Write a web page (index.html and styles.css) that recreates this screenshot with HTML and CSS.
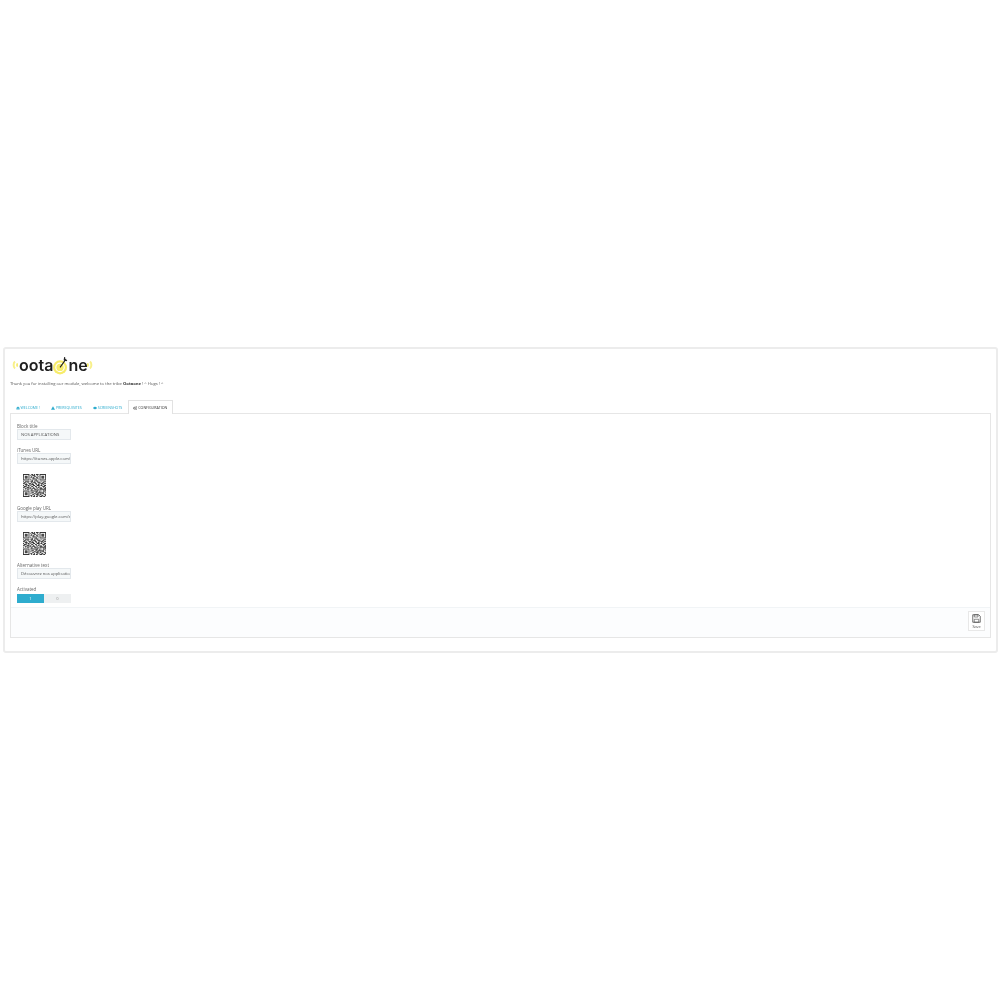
FILE: index.html
```html
<!DOCTYPE html>
<html lang="en">

<head>
    <meta charset="UTF-8">
    <title>Ootaone module configuration</title>
    <link rel="stylesheet" href="styles.css">
</head>

<body>
    <svg class="defs" width="0" height="0">
        <symbol id="qr" viewBox="0 0 25 25">
            <path fill="none" stroke="#1c1c1c" stroke-width="1" d="M0 .5h7M18 .5h7M9 .5h2M12 .5h1M14 .5h3
                M0 1.5h1M6 1.5h1M8 1.5h1M10 1.5h3M15 1.5h1M18 1.5h1M24 1.5h1
                M0 2.5h1M2 2.5h3M6 2.5h1M9 2.5h1M12 2.5h2M16 2.5h1M18 2.5h1M20 2.5h3M24 2.5h1
                M0 3.5h1M2 3.5h3M6 3.5h1M8 3.5h2M11 3.5h1M14 3.5h2M18 3.5h1M20 3.5h3M24 3.5h1
                M0 4.5h1M2 4.5h3M6 4.5h1M10 4.5h3M15 4.5h2M18 4.5h1M20 4.5h3M24 4.5h1
                M0 5.5h1M6 5.5h1M8 5.5h1M11 5.5h1M13 5.5h2M18 5.5h1M24 5.5h1
                M0 6.5h7M8 6.5h1M10 6.5h1M12 6.5h1M14 6.5h1M16 6.5h1M18 6.5h7
                M9 7.5h2M13 7.5h3
                M0 8.5h1M2 8.5h5M8 8.5h3M12 8.5h1M15 8.5h2M18 8.5h1M20 8.5h1M22 8.5h3
                M1 9.5h2M5 9.5h1M9 9.5h1M11 9.5h3M16 9.5h3M21 9.5h2
                M0 10.5h2M3 10.5h1M6 10.5h3M10 10.5h1M13 10.5h2M17 10.5h1M19 10.5h3M23 10.5h2
                M2 11.5h3M7 11.5h1M9 11.5h3M14 11.5h1M16 11.5h2M20 11.5h1M22 11.5h1
                M0 12.5h1M3 12.5h1M5 12.5h2M8 12.5h1M11 12.5h2M15 12.5h3M19 12.5h2M23 12.5h2
                M1 13.5h3M6 13.5h1M9 13.5h2M13 13.5h2M17 13.5h1M21 13.5h3
                M0 14.5h2M4 14.5h3M8 14.5h1M11 14.5h1M14 14.5h1M16 14.5h2M19 14.5h1M22 14.5h1M24 14.5h1
                M2 15.5h2M5 15.5h1M7 15.5h2M10 15.5h3M15 15.5h1M18 15.5h3M23 15.5h2
                M0 16.5h1M2 16.5h1M4 16.5h3M9 16.5h1M12 16.5h3M16 16.5h1M18 16.5h7
                M8 17.5h3M13 17.5h1M15 17.5h2M18 17.5h1M22 17.5h1M24 17.5h1
                M0 18.5h7M9 18.5h1M11 18.5h2M14 18.5h2M18 18.5h1M20 18.5h1M22 18.5h3
                M0 19.5h1M6 19.5h1M8 19.5h1M10 19.5h1M13 19.5h3M17 19.5h2M22 19.5h1
                M0 20.5h1M2 20.5h3M6 20.5h1M9 20.5h3M14 20.5h1M16 20.5h7M24 20.5h1
                M0 21.5h1M2 21.5h3M6 21.5h1M8 21.5h1M12 21.5h2M15 21.5h2M19 21.5h1M21 21.5h2
                M0 22.5h1M2 22.5h3M6 22.5h1M10 22.5h2M14 22.5h3M18 22.5h2M23 22.5h2
                M0 23.5h1M6 23.5h1M8 23.5h2M12 23.5h1M15 23.5h1M17 23.5h1M20 23.5h2M24 23.5h1
                M0 24.5h7M9 24.5h1M11 24.5h2M14 24.5h2M18 24.5h3M22 24.5h2" />
        </symbol>
    </svg>

    <div class="panel">
        <div class="logo">
            <svg class="logo-wave" viewBox="0 0 6 10">
                <path d="M3 1.500C1.200 3 1.200 7 3 8.500" fill="none" stroke="#f8f08a" stroke-width="2" />
                <path d="M5.500 3.500C4.800 4.500 4.800 5.500 5.500 6.500" fill="none" stroke="#f5e94f" stroke-width="1.400" />
            </svg>
            <span class="logo-text">oota</span>
            <svg class="logo-target" viewBox="0 0 16 20">
                <circle cx="7.500" cy="12" r="7.500" fill="#f7ec6a" />
                <circle cx="7.500" cy="12" r="4.500" fill="none" stroke="#fff" stroke-width="1.200" />
                <path d="M7.500 12L14 3M12.500 1l-.5 3 3 1" fill="none" stroke="#222" stroke-width="1.200" />
            </svg>
            <span class="logo-text">ne</span>
            <svg class="logo-wave" viewBox="0 0 6 10">
                <path d="M3 1.500C4.800 3 4.800 7 3 8.500" fill="none" stroke="#f8f08a" stroke-width="2" />
                <path d="M.5 3.500C1.200 4.500 1.200 5.500 .5 6.500" fill="none" stroke="#f5e94f" stroke-width="1.400" />
            </svg>
        </div>

        <p class="thanks">Thank you for installing our module, welcome to the tribe <b>Ootaone</b> ! ^ Hugs ! ^</p>

        <div class="tabs">
            <a class="tab">
                <svg class="tab-icon" viewBox="0 0 10 10"><path d="M5 1L0 5.500h1.500V9.500h2.500v-3h2v3h2.500V5.500H10z" /></svg>
                WELCOME !
            </a>
            <a class="tab">
                <svg class="tab-icon" viewBox="0 0 10 10"><path d="M5 .5L0 9.500h10z" /></svg>
                PREREQUISITES
            </a>
            <a class="tab">
                <svg class="tab-icon" viewBox="0 0 10 10"><path d="M0 5c2.500-4 7.500-4 10 0-2.500 4-7.500 4-10 0z" /></svg>
                SCREENSHOTS
            </a>
            <a class="tab active">
                <svg class="tab-icon" viewBox="0 0 10 10">
                    <circle cx="3.500" cy="5.500" r="2.300" fill="none" stroke="#333" stroke-width="1.500" />
                    <circle cx="8" cy="2.500" r="1.400" fill="none" stroke="#333" stroke-width="1" />
                    <circle cx="8" cy="8" r="1.400" fill="none" stroke="#333" stroke-width="1" />
                </svg>
                CONFIGURATION
            </a>
        </div>

        <div class="tab-content">
            <div class="form">
                <div class="field">
                    <label>Block title</label>
                    <div class="input">NOS APPLICATIONS</div>
                </div>
                <div class="field">
                    <label>iTunes URL</label>
                    <div class="input">https://itunes.apple.com/</div>
                </div>
                <svg class="qr"><use href="#qr" /></svg>
                <div class="field">
                    <label>Google play URL</label>
                    <div class="input">https://play.google.com/s</div>
                </div>
                <svg class="qr"><use href="#qr" /></svg>
                <div class="field">
                    <label>Alternative text</label>
                    <div class="input">Découvrez nos applicatio</div>
                </div>
                <div class="field">
                    <label>Activated</label>
                    <div class="switch">
                        <span class="switch-on">1</span>
                        <span class="switch-off">0</span>
                    </div>
                </div>
            </div>

            <div class="footer">
                <button class="save">
                    <svg class="save-icon" viewBox="0 0 12 12">
                        <path d="M1 1h8l2 2v8H1z" fill="none" stroke="#444" stroke-width="1" />
                        <path d="M3 1h5v3H3zM3 7h6v4H3z" fill="none" stroke="#444" stroke-width=".8" />
                    </svg>
                    Save
                </button>
            </div>
        </div>
    </div>
</body>

</html>
```

FILE: styles.css
```css
body {
    margin: 0;
    padding: 347px 2px 0 3px;
    background: white;
    font-family: 'Open Sans', sans-serif;
    color: #555;
}

.defs {
    position: absolute;
}

/* the reference is a scaled down shot, everything in it is a bit soft */
.panel {
    border: 2px solid #ececec;
    border-radius: 3px;
    padding: 8px 5px 13px 5px;
    height: 306px;
    box-sizing: border-box;
    filter: blur(0.3px);
}

.logo {
    display: flex;
    align-items: center;
    height: 16px;
    margin-left: 2px;
}

.logo-text {
    font-family: 'Inter', sans-serif;
    font-size: 16px;
    font-weight: 600;
    line-height: 16px;
    color: #1f1f1f;
}

.logo-wave {
    width: 6px;
    height: 10px;
    margin-right: 1px;
}

.logo-text + .logo-wave {
    margin: 0 0 0 -1px;
}

.logo-target {
    width: 15px;
    height: 19px;
}

.thanks {
    margin: 8px 0 0;
    font-size: 4.2px;
    line-height: 6px;
}

.thanks b {
    color: #333;
}

.tabs {
    display: flex;
    margin-top: 13px;
    height: 14px;
}

.tab {
    display: flex;
    align-items: center;
    gap: 1px;
    padding: 0 4.5px;
    font-size: 3.6px;
    color: #2eacce;
    border: 1px solid transparent;
    border-bottom: none;
}

.tab-icon {
    width: 4px;
    height: 4px;
    fill: #2eacce;
}

.tab.active {
    color: #333;
    background: white;
    border-color: #e2e2e2;
    position: relative;
    z-index: 1;
}

.tab-content {
    border: 1px solid #e6e6e6;
    margin-top: -1px;
    height: 225px;
    box-sizing: border-box;
    display: flex;
    flex-direction: column;
}

.form {
    flex: 1;
    min-height: 0;
    padding: 9px 6px 0;
    width: 54px;
}

.field {
    margin-bottom: 7px;
}

label {
    display: block;
    font-size: 4.5px;
    line-height: 6px;
    color: #666;
}

.input {
    box-sizing: border-box;
    width: 54px;
    height: 11px;
    padding: 0 3px;
    border: 1px solid #e3e8ec;
    background: #f5f8f9;
    font-size: 4.2px;
    line-height: 9px;
    white-space: nowrap;
    overflow: hidden;
    color: #555;
}

.qr {
    display: block;
    width: 23px;
    height: 23px;
    margin: 10px 0 7.5px 6px;
}

.switch {
    display: flex;
    height: 9px;
    margin-top: 2px;
    font-size: 4px;
    line-height: 9px;
    text-align: center;
}

.switch-on {
    flex: 1;
    background: #2eacce;
    color: white;
}

.switch-off {
    flex: 1;
    background: #eef0f1;
    color: #999;
}

.footer {
    flex: none;
    display: flex;
    justify-content: flex-end;
    height: 30px;
    box-sizing: border-box;
    padding: 3px 5px 0;
    background: #fcfdfe;
    border-top: 1px solid #f1f4f6;
}

.save {
    display: flex;
    flex-direction: column;
    align-items: center;
    justify-content: center;
    gap: 1px;
    width: 17px;
    height: 20px;
    padding: 0;
    background: white;
    border: 1px solid #e8e8e8;
    font-family: inherit;
    font-size: 3.8px;
    color: #555;
}

.save-icon {
    width: 9px;
    height: 9px;
}
```
